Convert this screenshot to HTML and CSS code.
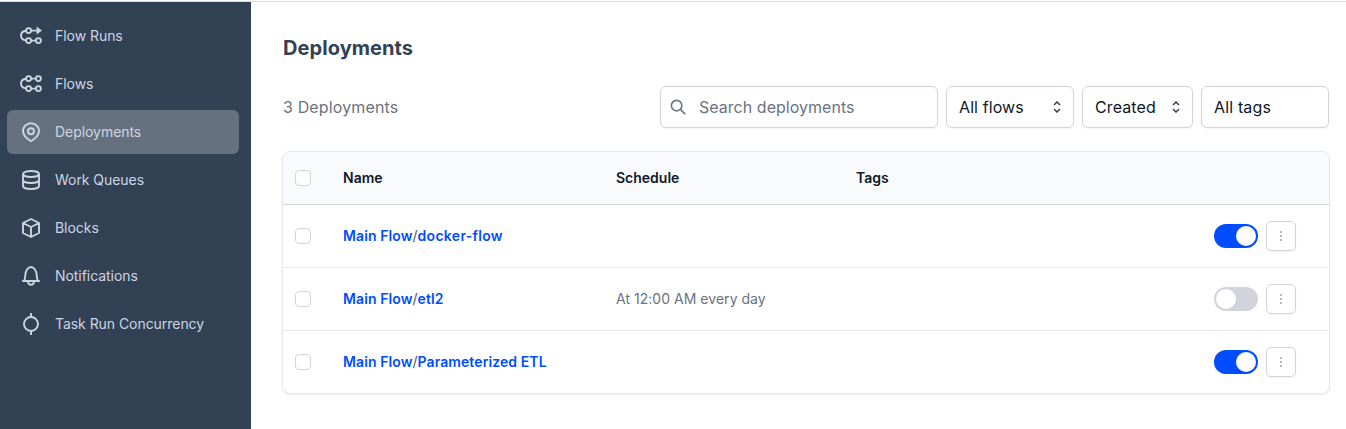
FILE: index.html
```
<!DOCTYPE html>
<html lang="en">
<head>
<meta charset="utf-8">
<title>Deployments</title>
<link rel="stylesheet" href="styles.css">
</head>
<body>
<div class="app">
  <nav class="sidebar">
    <a class="nav-item"><svg class="nav-icon" viewBox="0 0 24 24"><circle cx="9.6" cy="6.6" r="2.5"/><circle cx="9.6" cy="16.6" r="2.5"/><circle cx="19.4" cy="16.6" r="2.5"/><path d="M12.100 6.600h6M12.100 16.600h4.800M7.100 6.800C3.700 7.100 2 9 2 11.600s1.700 4.600 5.100 4.900"/><path class="solid" d="M17.600 2.600 23 6.600l-5.400 4z"/></svg><span>Flow Runs</span></a>
    <a class="nav-item"><svg class="nav-icon" viewBox="0 0 24 24"><circle cx="9.6" cy="6.6" r="2.5"/><circle cx="19.4" cy="6.6" r="2.5"/><circle cx="9.6" cy="16.6" r="2.5"/><circle cx="19.4" cy="16.6" r="2.5"/><path d="M12.100 6.600h4.800M12.100 16.600h4.800M7.100 6.800C3.700 7.100 2 9 2 11.600s1.700 4.600 5.100 4.900"/></svg><span>Flows</span></a>
    <a class="nav-item active"><svg class="nav-icon" viewBox="0 0 24 24"><path d="M12 21.300c-2-1.300-8-5.400-8-10.100a8 8 0 0 1 16 0c0 4.700-6 8.800-8 10.100z"/><circle cx="12" cy="11.200" r="3"/></svg><span>Deployments</span></a>
    <a class="nav-item"><svg class="nav-icon" viewBox="0 0 24 24"><ellipse cx="12" cy="6" rx="8" ry="3"/><path d="M4 6v12c0 1.660 3.580 3 8 3s8-1.340 8-3V6M4 12c0 1.660 3.580 3 8 3s8-1.340 8-3"/></svg><span>Work Queues</span></a>
    <a class="nav-item"><svg class="nav-icon" viewBox="0 0 24 24"><path d="m20 7-8-4-8 4v10l8 4 8-4zM4 7l8 4 8-4M12 11v10"/></svg><span>Blocks</span></a>
    <a class="nav-item"><svg class="nav-icon" viewBox="0 0 24 24"><path d="M3.200 17h17.600M5 17c1.200-1.800 1.100-3.500 1.300-6C6.600 6.300 9.200 3 12 3s5.400 3.300 5.700 8c.2 2.500.1 4.200 1.300 6M9 17.500c0 2 1.200 3.200 3 3.200s3-1.200 3-3.200"/></svg><span>Notifications</span></a>
    <a class="nav-item"><svg class="nav-icon" viewBox="0 0 24 24"><circle cx="12" cy="12" r="7"/><path d="M12 1v4M12 19v4"/></svg><span>Task Run Concurrency</span></a>
  </nav>
  <main class="content">
    <h1 class="title">Deployments</h1>
    <div class="toolbar">
      <span class="count">3 Deployments</span>
      <div class="field search"><svg class="search-icon" viewBox="0 0 20 20"><circle cx="8" cy="8" r="5.500"/><path d="m12 12 5 5"/></svg><span>Search deployments</span></div>
      <div class="field flows"><span>All flows</span><svg class="chevrons" viewBox="0 0 8 12"><path d="M1 4 4 1l3 3M1 8l3 3 3-3"/></svg></div>
      <div class="field sort"><span>Created</span><svg class="chevrons" viewBox="0 0 8 12"><path d="M1 4 4 1l3 3M1 8l3 3 3-3"/></svg></div>
      <div class="field tags"><span>All tags</span></div>
    </div>
    <section class="table">
      <div class="row head"><i class="checkbox"></i><span>Name</span><span>Schedule</span><span>Tags</span></div>
      <div class="row"><i class="checkbox"></i><span class="name"><b>Main Flow</b>/<b class="wide">docker-flow</b></span><span></span><span></span><div class="actions"><i class="toggle on"></i><button class="more"><svg viewBox="0 0 4 10"><path d="M1 1h2M1 5h2M1 9h2"/></svg></button></div></div>
      <div class="row"><i class="checkbox"></i><span class="name"><b>Main Flow</b>/<b>etl2</b></span><span class="schedule">At 12:00 AM every day</span><span></span><div class="actions"><i class="toggle"></i><button class="more"><svg viewBox="0 0 4 10"><path d="M1 1h2M1 5h2M1 9h2"/></svg></button></div></div>
      <div class="row"><i class="checkbox"></i><span class="name"><b>Main Flow</b>/<b>Parameterized ETL</b></span><span></span><span></span><div class="actions"><i class="toggle on"></i><button class="more"><svg viewBox="0 0 4 10"><path d="M1 1h2M1 5h2M1 9h2"/></svg></button></div></div>
    </section>
  </main>
</div>
</body>
</html>
```
FILE: styles.css
```
* { box-sizing: border-box; }
body { margin: 0; padding-top: 1px; background: #fff; font: 14px/20px Inter, sans-serif; color: #0f172a; height: 429px; overflow: hidden; }
.app { display: flex; height: 428px; border-top: 1px solid #d8dce0; }
.sidebar { width: 251px; flex: none; padding: 12px 12px 0 7px; background: #334155; display: flex; flex-direction: column; gap: 4px; }
.nav-item { display: flex; align-items: center; gap: 12px; height: 44px; flex: none; padding: 0 12px; border-radius: 6px; color: #cbd5e1; letter-spacing: -.05px; }
.nav-item.active { background: #66717f; }
.nav-icon { width: 24px; height: 24px; fill: none; stroke: currentColor; stroke-width: 1.900; stroke-linejoin: round; }
.nav-icon .solid { fill: currentColor; stroke: none; }
.content { flex: 1; padding: 32px 16px 0 31px; }
.title { margin: 0 0 0 1px; font-size: 20px; line-height: 28px; font-weight: 700; letter-spacing: .07px; color: #334155; }
.toolbar { display: flex; align-items: center; gap: 8px; margin: 24px 1px 23px 1px; height: 42px; font-size: 16px; line-height: 24px; }
.count { flex: 1; color: #6b7280; letter-spacing: .14px; }
.field { display: flex; align-items: center; justify-content: space-between; height: 42px; padding: 0 12px; border: 1px solid #d1d5db; border-radius: 6px; background: #fff; box-shadow: 0 1px 2px rgba(0,0,0,.05); }
.search { width: 278px; padding-left: 8px; justify-content: flex-start; gap: 11px; color: #6b7280; letter-spacing: .03px; }
.search-icon { width: 19px; height: 19px; fill: none; stroke: currentColor; stroke-width: 1.700; }
.flows { width: 128px; letter-spacing: .1px; }
.sort { width: 111px; letter-spacing: .1px; }
.tags { width: 128px; letter-spacing: .15px; }
.chevrons { width: 8px; height: 12px; fill: none; stroke: #334155; stroke-width: 1.500; }
.table { border: 1px solid #e5e7eb; border-radius: 8px; box-shadow: 0 1px 2px rgba(0,0,0,.08); overflow: hidden; }
.row { display: grid; grid-template-columns: 48px 273px 240px 1fr auto; align-items: center; height: 63px; padding: 0 33px 0 12px; border-bottom: 1px solid #e5e7eb; }
.row:last-child { height: 62px; border-bottom: 0; }
.head { height: 53px; background: #f8fafc; border-bottom-color: #d1d5db; font-weight: 600; }
.checkbox { width: 16px; height: 16px; border: 1px solid #d1d5db; border-radius: 4px; background: #fff; }
.name { color: #4b5563; white-space: nowrap; }
.name b { color: #004dff; font-weight: 600; letter-spacing: .09px; }
.name .wide { letter-spacing: .3px; }
.schedule { color: #6b7280; letter-spacing: .03px; }
.actions { display: flex; align-items: center; gap: 8px; }
.toggle { display: flex; width: 44px; height: 24px; padding: 2px; border-radius: 12px; background: #d1d5db; }
.toggle::before { content: ""; width: 20px; height: 20px; border-radius: 50%; background: #fff; }
.toggle.on { background: #004dff; justify-content: flex-end; }
.more { display: grid; place-items: center; width: 30px; height: 30px; padding: 0; border: 1px solid #d1d5db; border-radius: 5px; background: #fff; box-shadow: 0 1px 2px rgba(0,0,0,.05); }
.more svg { width: 4px; height: 10px; stroke: #6b7280; stroke-width: 1; }
```
